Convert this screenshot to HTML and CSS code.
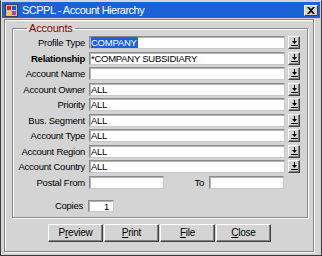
FILE: index.html
```html
<!DOCTYPE html>
<html>
<head>
<meta charset="utf-8">
<link rel="stylesheet" href="styles.css">
</head>
<body>
<div class="window">
  <div class="titlebar">
    <span class="app-icon">
      <svg width="13" height="13" viewBox="0 0 13 13">
        <rect x="0.5" y="0.5" width="12" height="12" fill="#c0c0c0" stroke="#404040"/>
        <rect x="2" y="2" width="4" height="4" fill="#e02020"/>
        <rect x="7" y="2" width="4" height="4" fill="#2050e0"/>
        <rect x="2" y="7" width="4" height="4" fill="#f0d020"/>
        <rect x="7" y="7" width="4" height="4" fill="#b040c0"/>
      </svg>
    </span>
    <span class="title">SCPPL - Account Hierarchy</span>
    <span class="close-btn">
      <svg width="8" height="7" viewBox="0 0 8 7"><path d="M0 0h2l2 2 2-2h2L5 3.5 8 7H6L4 5 2 7H0l3-3.5z" fill="#000"/></svg>
    </span>
  </div>
  <div class="panel">
    <fieldset class="group">
      <legend>Accounts</legend>
      <div class="form">
        <span class="lbl">Profile Type</span>
        <div class="field"><span class="input"><span class="sel">COMPANY</span></span><span class="dd"><svg width="7" height="8" viewBox="0 0 7 8"><path d="M3 0h1v3h2L3.5 6 1 3h2z" fill="#000"/><rect x="0" y="7" width="7" height="1" fill="#000"/></svg></span></div>

        <span class="lbl bold">Relationship</span>
        <div class="field"><span class="input">*COMPANY SUBSIDIARY</span><span class="dd"><svg width="7" height="8" viewBox="0 0 7 8"><path d="M3 0h1v3h2L3.5 6 1 3h2z" fill="#000"/><rect x="0" y="7" width="7" height="1" fill="#000"/></svg></span></div>

        <span class="lbl">Account Name</span>
        <div class="field"><span class="input"></span><span class="dd"><svg width="7" height="8" viewBox="0 0 7 8"><path d="M3 0h1v3h2L3.5 6 1 3h2z" fill="#000"/><rect x="0" y="7" width="7" height="1" fill="#000"/></svg></span></div>

        <span class="lbl">Account Owner</span>
        <div class="field"><span class="input">ALL</span><span class="dd"><svg width="7" height="8" viewBox="0 0 7 8"><path d="M3 0h1v3h2L3.5 6 1 3h2z" fill="#000"/><rect x="0" y="7" width="7" height="1" fill="#000"/></svg></span></div>

        <span class="lbl">Priority</span>
        <div class="field"><span class="input">ALL</span><span class="dd"><svg width="7" height="8" viewBox="0 0 7 8"><path d="M3 0h1v3h2L3.5 6 1 3h2z" fill="#000"/><rect x="0" y="7" width="7" height="1" fill="#000"/></svg></span></div>

        <span class="lbl">Bus. Segment</span>
        <div class="field"><span class="input">ALL</span><span class="dd"><svg width="7" height="8" viewBox="0 0 7 8"><path d="M3 0h1v3h2L3.5 6 1 3h2z" fill="#000"/><rect x="0" y="7" width="7" height="1" fill="#000"/></svg></span></div>

        <span class="lbl">Account Type</span>
        <div class="field"><span class="input">ALL</span><span class="dd"><svg width="7" height="8" viewBox="0 0 7 8"><path d="M3 0h1v3h2L3.5 6 1 3h2z" fill="#000"/><rect x="0" y="7" width="7" height="1" fill="#000"/></svg></span></div>

        <span class="lbl">Account Region</span>
        <div class="field"><span class="input">ALL</span><span class="dd"><svg width="7" height="8" viewBox="0 0 7 8"><path d="M3 0h1v3h2L3.5 6 1 3h2z" fill="#000"/><rect x="0" y="7" width="7" height="1" fill="#000"/></svg></span></div>

        <span class="lbl">Account Country</span>
        <div class="field"><span class="input">ALL</span><span class="dd"><svg width="7" height="8" viewBox="0 0 7 8"><path d="M3 0h1v3h2L3.5 6 1 3h2z" fill="#000"/><rect x="0" y="7" width="7" height="1" fill="#000"/></svg></span></div>

        <span class="lbl">Postal From</span>
        <div class="field postal"><span class="input short"></span><span class="to">To</span><span class="input short"></span></div>
      </div>
      <div class="copies">
        <span class="lbl copies-lbl">Copies</span>
        <span class="input num">1</span>
      </div>
    </fieldset>
    <div class="buttons">
      <span class="btn">P<u>r</u>eview</span>
      <span class="btn"><u>P</u>rint</span>
      <span class="btn"><u>F</u>ile</span>
      <span class="btn"><u>C</u>lose</span>
    </div>
  </div>
</div>
</body>
</html>
```

FILE: styles.css
```css
* { box-sizing: border-box; }
html, body {
  margin: 0;
  padding: 0;
  width: 322px;
  height: 256px;
  overflow: hidden;
  background: #d4d4d4;
}
body {
  font-family: "Liberation Sans", Arial, sans-serif;
  font-size: 9.5px;
  letter-spacing: -0.25px;
  color: #000;
}
.window {
  width: 322px;
  height: 256px;
  border: 1px solid #3a3a3a;
  border-top-color: #d4d4d4;
  padding: 1px;
  background: #d4d4d4;
  display: flex;
  flex-direction: column;
}
.titlebar {
  height: 16px;
  background: #1a62d6;
  display: flex;
  align-items: center;
  padding-left: 3px;
  padding-right: 2px;
  color: #fff;
  flex: none;
}
.app-icon { display: flex; width: 13px; height: 13px; }
.title {
  margin-left: 4px;
  font-size: 11px;
  letter-spacing: -0.5px;
  flex: 1;
}
.close-btn {
  width: 14px;
  height: 11px;
  background: #d4d4d4;
  border: 1px solid;
  border-color: #fff #404040 #404040 #fff;
  display: flex;
  align-items: center;
  justify-content: center;
}
.panel {
  flex: 1;
  margin: 1px 6px 2px 2px;
  border: 1px solid #808080;
  box-shadow: inset 1px 1px 0 #fff, 1px 1px 0 #fff;
  padding: 2px 5px 0 7px;
  display: flex;
  flex-direction: column;
}
.group {
  margin: 0;
  padding: 0 7px 5px 1px;
  border: 1px solid #8a8a8a;
  box-shadow: inset 1px 1px 0 #fff, 1px 1px 0 #fff;
  min-width: 0;
}
.group legend {
  margin-left: 13px;
  padding: 0 2px;
  color: #8b0000;
  font-size: 11px;
  letter-spacing: -0.2px;
  line-height: 12px;
}
.form {
  display: grid;
  grid-template-columns: 71px 1fr;
  column-gap: 4px;
  grid-auto-rows: 13px;
  row-gap: 2.56px;
  padding-top: 2px;
}
.lbl {
  text-align: right;
  line-height: 13px;
  white-space: nowrap;
}
.bold { font-weight: bold; }
.field {
  display: flex;
  gap: 3px;
  height: 13px;
}
.input {
  flex: 1;
  height: 13px;
  background: #fff;
  border: 1px solid;
  border-color: #8c8c8c #c8c8c8 #c8c8c8 #8c8c8c;
  box-shadow: inset 1px 1px 0 #b4b4b4;
  line-height: 11px;
  padding-left: 1px;
  white-space: nowrap;
  overflow: hidden;
}
.sel {
  display: inline-block;
  background: #1a62d6;
  color: #fff;
  height: 11px;
  line-height: 11px;
  padding: 0 1px 0 0;
}
.dd {
  width: 12px;
  height: 13px;
  flex: none;
  background: #d4d4d4;
  border: 1px solid;
  border-color: #fff #404040 #404040 #fff;
  box-shadow: inset -1px -1px 0 #808080;
  display: flex;
  align-items: center;
  justify-content: center;
  padding-bottom: 1px;
}
.postal { gap: 0; padding-right: 16px; }
.input.short { flex: none; width: 75px; }
.to {
  flex: 1;
  text-align: right;
  line-height: 13px;
  padding-right: 5px;
}
.copies {
  display: flex;
  align-items: center;
  margin-top: 11px;
  height: 12px;
}
.copies-lbl { width: 69px; }
.input.num {
  flex: none;
  width: 26px;
  margin-left: 5px;
  height: 12px;
  text-align: right;
  padding-right: 4px;
}
.buttons {
  display: flex;
  gap: 1px;
  padding-left: 36px;
  margin-top: 6px;
}
.btn {
  width: 55px;
  height: 18px;
  background: #d4d4d4;
  border: 1px solid;
  border-color: #fff #404040 #404040 #fff;
  box-shadow: inset -1px -1px 0 #808080;
  display: flex;
  align-items: center;
  justify-content: center;
  font-size: 10px;
}
.btn u { text-decoration-thickness: 1px; }
```
